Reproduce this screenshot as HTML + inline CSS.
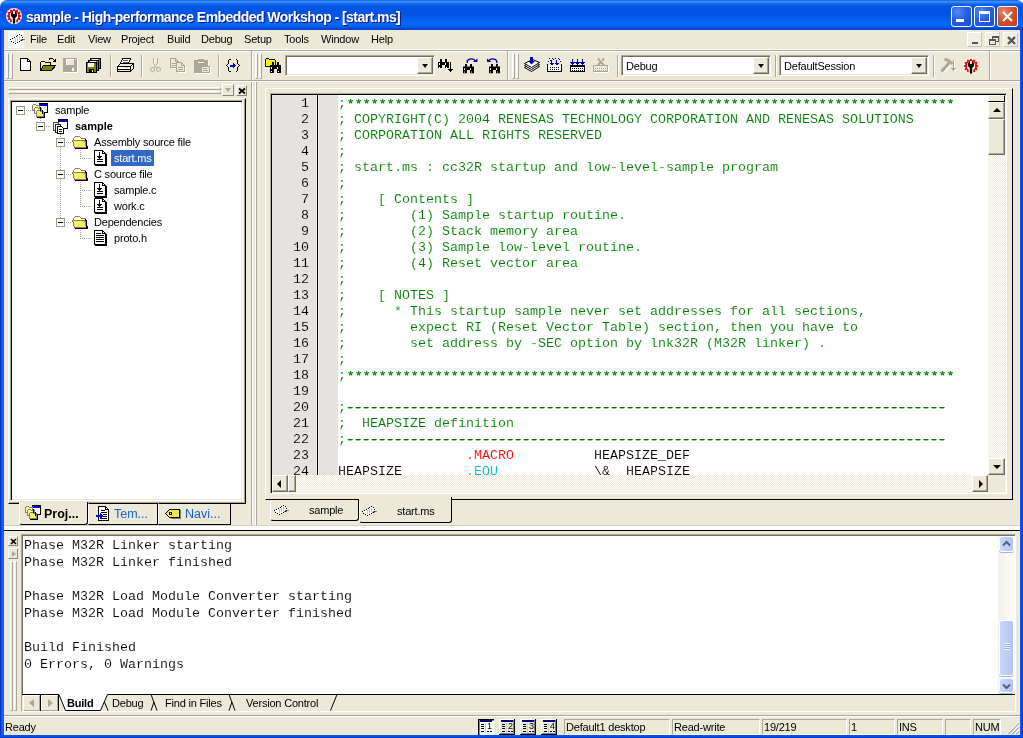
<!DOCTYPE html>
<html><head><meta charset="utf-8"><title>sample - High-performance Embedded Workshop - [start.ms]</title>
<style>
*,*:before,*:after{box-sizing:border-box;margin:0;padding:0}
html,body{width:1023px;height:738px;overflow:hidden;background:#ECE9D8}
body{position:relative;font-family:"Liberation Sans",sans-serif;font-size:11px;color:#000;letter-spacing:-0.2px}
.abs,.abs *{position:absolute}
#win{position:absolute;left:0;top:0;width:1023px;height:738px;overflow:hidden;will-change:transform}
#title{left:0;top:0;width:1024px;height:30px;background:linear-gradient(180deg,#0958d9 0,#3d8ff8 1.5px,#2f83f5 2.5px,#1166ec 4px,#0457e4 6px,#0354e3 9px,#0355e5 15px,#0560f0 20px,#0768fa 24px,#0663f2 26px,#0349d2 28.5px,#0240be 30px);border-radius:7px 7px 0 0}
#title .txt{left:26px;top:9px;color:#fff;font-weight:bold;font-size:14px;white-space:nowrap;text-shadow:1px 1px 0 #0a1883;letter-spacing:-0.55px}
.bl{background:#0855dd}
#menubar{left:4px;top:30px;width:1016px;height:20px;background:#ECE9D8}
#menubar span{top:3px;white-space:nowrap}
.tb{background:#ECE9D8}
.white{background:#fff}
.mono{font-family:"Liberation Mono",monospace;font-size:13.33px;white-space:pre;letter-spacing:0}

.hl{height:2px;border-top:1px solid #ACA899;border-bottom:1px solid #fff}
.vl{width:2px;border-left:1px solid #ACA899;border-right:1px solid #fff}
.vsep{width:2px;height:22px;border-left:1px solid #ACA899;border-right:1px solid #fff}
.grip{width:7px;height:26px}
.grip:before,.grip:after{content:"";position:absolute;top:0;width:3px;height:26px;background:#f7f6f0;border-left:1px solid #fff;border-top:1px solid #fff;border-right:1px solid #ACA899;border-bottom:1px solid #ACA899}
.grip:before{left:0}.grip:after{left:4px}
.combo{height:21px;background:#fff;border:1px solid;border-color:#ACA899 #fff #fff #ACA899;box-shadow:inset 1px 1px 0 #716F64,inset -1px -1px 0 #ECE9D8}
.combo span{left:4px;top:4px;font-size:11px;white-space:nowrap}
.combo:after{content:"";position:absolute;right:1px;top:1px;width:16px;height:17px;background:#ECE9D8;border:1px solid;border-color:#fff #716F64 #716F64 #fff;box-shadow:inset -1px -1px 0 #ACA899}
.combo:before{content:"";position:absolute;right:6px;top:8px;border:3.500px solid transparent;border-top:4px solid #000;border-bottom:0;z-index:2}
.mdib{width:15px;height:15px;background:#F1EFE5;border:1px solid;border-color:#fff #c9c6b8 #c9c6b8 #fff}

.hbar{height:3px;border-top:1px solid #fff;border-left:1px solid #fff;border-bottom:1px solid #ACA899;border-right:1px solid #ACA899}
.pbtn{background:#ECE9D8;border:1px solid;border-color:#fff #8a8778 #8a8778 #fff}
#treebox{border:1px solid;border-color:#fff #000 #000 #fff;box-shadow:inset -1px -1px 0 #ACA899}
#treebox:after{content:"";position:absolute;left:1px;top:1px;right:2px;bottom:2px;border:1px solid;border-color:#ACA899 #fff #fff #ACA899;box-shadow:inset 1px 1px 0 #000,inset -1px -1px 0 #ECE9D8}
.ptab{background:#ECE9D8;border:1px solid #000;border-left-color:#fff;font-size:12px;color:#1b5fd0;white-space:nowrap}
.ptab.act{border-top:0;color:#000;border-radius:0 0 3px 3px}
.ptab b,.ptab span{font-size:12.5px;letter-spacing:0}

.xb{width:9px;height:9px;border:1px solid #9c9a8c;background:#fff}
.xb:after{content:"";position:absolute;left:1px;top:3px;width:5px;height:1px;background:#000}
.hd{height:1px;background:repeating-linear-gradient(90deg,#a9a698 0 1px,transparent 1px 2px)}
.vd{width:1px;background:repeating-linear-gradient(180deg,#a9a698 0 1px,transparent 1px 2px)}
.tt{font-size:11px;line-height:16px;height:16px;white-space:nowrap}
.tt.b{font-weight:bold;letter-spacing:0}
.tt.sel{background:#316AC5;color:#fff;padding:0 2px 0 3px}

#lnum{left:0;top:1px;-webkit-text-stroke:0.1px #E5E2DF;width:37px;text-align:right;line-height:16px;color:#000}
#code{left:66px;top:1px;-webkit-text-stroke:0.1px #fff;line-height:16px;color:#000}
#code .c{position:static;color:#008000}
#code .s{position:relative;top:1px;left:0.500px;-webkit-text-stroke:0;text-shadow:0.300px 0 0 #008000}
#code .d{position:static;-webkit-text-stroke:0.3px #008000;text-shadow:1px 0 0 #008000,-0.500px 0 0 #008000}
#code .r{position:static;color:#f00}
#code .q{position:static;color:#10b8e8}
.dith{background:repeating-conic-gradient(#fff 0 25%,#ECE9D8 0 50%) 0 0/2px 2px}
.sbtn{background:#ECE9D8;border:1px solid;border-color:#fff #716F64 #716F64 #fff;box-shadow:inset -1px -1px 0 #ACA899}
.aup{left:4px;top:5px;border:4px solid transparent;border-bottom:4px solid #000;border-top:0}
.adn{left:4px;top:6px;border:4px solid transparent;border-top:4px solid #000;border-bottom:0}
.alt{left:4px;top:4px;border:4px solid transparent;border-right:4px solid #000;border-left:0}
.art{left:6px;top:4px;border:4px solid transparent;border-left:4px solid #000;border-right:0}
.mtab{background:#ECE9D8;border:1px solid #000;border-left-color:#fff;border-top:0;font-size:11px;white-space:nowrap;border-radius:0 0 3px 3px}
.mtab.act{border-top:0}

.vbar{width:3px;border-top:1px solid #fff;border-left:1px solid #fff;border-bottom:1px solid #ACA899;border-right:1px solid #ACA899}
#out{line-height:17px;color:#000;-webkit-text-stroke:0.1px #fff}
.xpb{background:linear-gradient(90deg,#c9d7fb,#bccdf8 60%,#b5c6f3);border:1px solid #fff;border-radius:3px;box-shadow:0 1px 0 #9fb5e6}
.sbtn2{background:#ECE9D8;border:1px solid;border-color:#fff #ACA899 #ACA899 #fff}
.sp{top:719px;height:16px;border:1px solid;border-color:#ACA899 #fff #fff #ACA899}
.sp span{left:1px;top:1px;font-size:11px;white-space:nowrap}

.cb{width:21px;height:21px;border:1px solid #fff;border-radius:3px;background:radial-gradient(circle at 30% 25%,#4c8af5 0,#2a5fe0 45%,#1d4bcc 100%)}
.cb.x{background:radial-gradient(circle at 30% 25%,#e8886a 0,#d4532e 45%,#b8391a 100%)}
</style></head><body>
<svg width="0" height="0" style="position:absolute"><defs>
<g id="i-ws"><rect x="7.500" y="0.500" width="8" height="9" fill="#fff" stroke="#000"/><rect x="7" y="1" width="8" height="2" fill="#0000d0"/><path d="M7.500 1v-0.500h8" stroke="#000" fill="none"/><path d="M0.500 2.500l1-1h2l1 1h3v5h-7z" fill="#fbf8a0" stroke="#808080"/><path d="M2.500 5.500l1-1h2l1 1h3v5h-7z" fill="#fbf8a0" stroke="#808080"/><path d="M4.500 8.500l1-1h2l1 1h3v5h-7z" fill="#f6f25c" stroke="#808080"/><path d="M12.500 9v5.500h-8" fill="none" stroke="#000"/><path d="M10.500 7v4M8.500 4v4" fill="none" stroke="#000"/></g>
<g id="i-prj"><rect x="6" y="0" width="9" height="9" fill="#fff" stroke="#000"/><rect x="7" y="1" width="8" height="2" fill="#0000c0"/><path d="M1.5 3.5h5v8h-5z" fill="#fff" stroke="#444"/><path d="M3.5 5.5h5v8h-5z" fill="#fff" stroke="#222"/><path d="M5.500 7.500h4l2 2v5h-6z" fill="#fff" stroke="#000"/><path d="M7 10h3M7 12h3" stroke="#000"/></g>
<g id="i-fold"><path d="M1.500 9.500v-6l2-2h4l2 2h4v5" fill="#ffffc4" stroke="#808080"/><path d="M0.500 5.500h12l2 7h-12z" fill="#f6f25c" stroke="#808080"/><path d="M13.500 4l2 9M3 13.500h13M14.500 5v8" fill="none" stroke="#000"/></g>
<g id="i-file"><path d="M2.500 0.500h8l3 3v11h-11z" fill="#fff" stroke="#000"/><path d="M14 4v11h-11" fill="none" stroke="#000"/><path d="M10.500 0.500v3h3" fill="none" stroke="#000"/><path d="M7.500 2v6M5.500 6l2 2 2-2M5 9.500h6M5 11.500h6" fill="none" stroke="#000"/></g>
<g id="i-doc"><path d="M2.500 0.500h8l3 3v11h-11z" fill="#fff" stroke="#000"/><path d="M14 4v11h-11" fill="none" stroke="#000"/><path d="M10.500 0.500v3h3" fill="none" stroke="#000"/><path d="M4 3.500h5M4 5.500h8M4 7.500h8M4 9.500h8M4 11.500h8" stroke="#000"/></g>
<g id="i-chip"><path d="M1.500 6.500L10.500 1.500L13.500 4.500V6.500L6.500 10.500Z" fill="#fff"/><path d="M6.500 5v4M8.500 4v4M10.500 3v4" stroke="#c4c4c4"/><path d="M12 6.500h4M11 7.500h3" stroke="#888"/><rect x="1" y="6" width="1" height="1" fill="#000"/><rect x="3" y="5" width="1" height="1" fill="#000"/><rect x="5" y="4" width="1" height="1" fill="#000"/><rect x="7" y="3" width="1" height="1" fill="#000"/><rect x="8" y="2" width="1" height="1" fill="#000"/><rect x="10" y="1" width="1" height="1" fill="#000"/><rect x="12" y="2" width="1" height="1" fill="#000"/><rect x="13" y="4" width="1" height="1" fill="#000"/><rect x="13" y="6" width="1" height="1" fill="#000"/><rect x="12" y="7" width="1" height="1" fill="#000"/><rect x="10" y="8" width="1" height="1" fill="#000"/><rect x="8" y="9" width="1" height="1" fill="#000"/><rect x="6" y="10" width="1" height="1" fill="#000"/><rect x="4" y="9" width="1" height="1" fill="#000"/><rect x="2" y="8" width="1" height="1" fill="#000"/></g>
<g id="i-gear"><circle r="8" fill="#fff"/><rect x="-0.9" y="-7.2" width="1.8" height="2.2" fill="#f00" transform="rotate(0)"/><rect x="-0.9" y="-7.2" width="1.8" height="2.2" fill="#f00" transform="rotate(30)"/><rect x="-0.9" y="-7.2" width="1.8" height="2.2" fill="#f00" transform="rotate(60)"/><rect x="-0.9" y="-7.2" width="1.8" height="2.2" fill="#f00" transform="rotate(90)"/><rect x="-0.9" y="-7.2" width="1.8" height="2.2" fill="#f00" transform="rotate(120)"/><rect x="-0.9" y="-7.2" width="1.8" height="2.2" fill="#f00" transform="rotate(150)"/><rect x="-0.9" y="-7.2" width="1.8" height="2.2" fill="#f00" transform="rotate(180)"/><rect x="-0.9" y="-7.2" width="1.8" height="2.2" fill="#f00" transform="rotate(210)"/><rect x="-0.9" y="-7.2" width="1.8" height="2.2" fill="#f00" transform="rotate(240)"/><rect x="-0.9" y="-7.2" width="1.8" height="2.2" fill="#f00" transform="rotate(270)"/><rect x="-0.9" y="-7.2" width="1.8" height="2.2" fill="#f00" transform="rotate(300)"/><rect x="-0.9" y="-7.2" width="1.8" height="2.2" fill="#f00" transform="rotate(330)"/><circle r="5.1" fill="none" stroke="#f00" stroke-width="2"/><circle r="4.1" fill="#fff"/><rect x="-2.200" y="3" width="4.400" height="5" fill="#fff"/><circle cx="0" cy="-1.300" r="3.100" fill="#000"/><rect x="-0.900" y="-5" width="1.800" height="3" fill="#fff"/><rect x="-1.200" y="0" width="2.400" height="7.600" fill="#000"/></g>
<g id="i-tmpl"><path d="M3.500 0.500h7l3 3v11h-10z" fill="#fff" stroke="#000"/><path d="M10.500 0.500v3h3" fill="none" stroke="#000"/><path d="M6 4.500h4M6 6.500h6M8 8.500h4M8 10.500h4M6 12.500h6" stroke="#000"/><path d="M1 9h4v-2l3 3l-3 3v-2h-4z" fill="#0000e0"/></g>
<g id="i-navi"><path d="M0.500 7.500l4-4h10v8h-10z" fill="#f0e848" stroke="#000"/><path d="M15.500 4v8h-10" fill="none" stroke="#777"/><rect x="4.500" y="6.500" width="2" height="2" fill="#fff" stroke="#000"/></g>
</defs></svg>
<div id="win" class="abs">
<div style="left:0;top:0;width:1023px;height:8px;background:#fff"></div>
<div id="title"><svg style="left:6px;top:8px" width="16" height="16" viewBox="-8 -8 16 16"><use href="#i-gear"/></svg><div class="cb" style="left:951px;top:6px"><i style="left:4px;top:12px;width:8px;height:3px;background:#fff"></i></div>
<div class="cb" style="left:974px;top:6px"><i style="left:4px;top:4px;width:11px;height:11px;border:1px solid #fff;border-top-width:3px"></i></div>
<div class="cb x" style="left:997px;top:6px"><svg style="left:3px;top:3px" width="13" height="13" viewBox="0 0 13 13"><path d="M2 2 L11 11 M11 2 L2 11" stroke="#fff" stroke-width="2.200"/></svg></div>
<div class="txt">sample - High-performance Embedded Workshop - [start.ms]</div></div>
<div style="left:0;top:30px;width:4px;height:708px;background:linear-gradient(90deg,#001bd0 0,#0a45e0 1px,#1668ee 2.500px,#0a58e0 4px)"></div>
<div style="left:1020px;top:30px;width:4px;height:708px;background:linear-gradient(90deg,#0a58e0 0,#0a50dc 1.500px,#0032d0 3px,#001bd0 4px)"></div>
<div style="left:0;top:735px;width:1024px;height:4px;background:linear-gradient(180deg,#0a58e0 0,#0a50dc 1.500px,#0032d0 3px,#001bd0 4px)"></div>
<div id="menubar">
<span style="left:26px">File</span><span style="left:53px">Edit</span><span style="left:84px">View</span><span style="left:117px">Project</span><span style="left:163px">Build</span><span style="left:197px">Debug</span><span style="left:240px">Setup</span><span style="left:280px">Tools</span><span style="left:317px">Window</span><span style="left:367px">Help</span>
</div>
<!-- menu icon + mdi buttons -->
<div style="left:8px;top:31px;width:16px;height:17px;background:#fff"></div>
<svg style="left:9px;top:33px" width="16" height="12" viewBox="0 0 16 12" shape-rendering="crispEdges"><use href="#i-chip"/></svg>
<div class="mdib" style="left:967px;top:32px"><i style="left:4px;top:9px;width:6px;height:2px;background:#555"></i></div>
<div class="mdib" style="left:985px;top:32px"><i style="left:6px;top:3px;width:7px;height:6px;border:1px solid #555;border-top-width:2px"></i><i style="left:3px;top:6px;width:7px;height:6px;border:1px solid #555;border-top-width:2px;background:#ECE9D8"></i></div>
<div class="mdib" style="left:1003px;top:32px"><svg style="left:3px;top:3px" width="9" height="9" viewBox="0 0 9 9"><path d="M1 1 L8 8 M8 1 L1 8" stroke="#555" stroke-width="2.400"/></svg></div>
<!-- etched lines -->
<div style="left:4px;top:49px;width:1016px;height:3px;background:#fff;border-top:1px solid #fff;border-bottom:1px solid #fff"><i style="left:0;top:0;width:1016px;height:1px;background:#ACA899"></i></div>
<div class="hl" style="left:4px;top:80px;width:1016px"></div>
<!-- toolbar 1 -->
<div class="grip" style="left:6px;top:53px"></div>
<div class="vsep" style="left:110px;top:55px"></div>
<div class="vsep" style="left:141px;top:55px"></div>
<div class="vsep" style="left:218px;top:55px"></div>
<div class="vl" style="left:251px;top:51px;height:29px"></div>
<div class="grip" style="left:255px;top:53px"></div>
<div class="combo" style="left:285px;top:55px;width:150px"></div>
<div class="vl" style="left:507px;top:51px;height:29px"></div>
<div class="grip" style="left:512px;top:53px"></div>
<div class="vsep" style="left:617px;top:55px"></div>
<div class="combo" style="left:621px;top:55px;width:150px"><span>Debug</span></div>
<div class="vsep" style="left:775px;top:55px"></div>
<div class="combo" style="left:779px;top:55px;width:150px"><span>DefaultSession</span></div>
<div class="vsep" style="left:933px;top:55px"></div>
<div class="vl" style="left:989px;top:51px;height:29px"></div>
<svg style="left:963px;top:58px" width="16" height="16" viewBox="-8 -8 16 16"><use href="#i-gear"/></svg>
<svg style="left:20px;top:58px" width="12" height="14" viewBox="0 0 12 14" shape-rendering="crispEdges"><path d="M0.500 0.500h7l3 3v9h-10z" fill="#fff" stroke="#000"/><path d="M7.500 0.500v3h3" fill="none" stroke="#000"/></svg>
<svg style="left:40px;top:57px" width="16" height="15" viewBox="0 0 16 15" shape-rendering="crispEdges"><path d="M0.500 13.500v-8l1-1h3l1 1h5v2" fill="#f7f38a" stroke="#000"/><path d="M0.500 13.500l3-5h12l-4 5z" fill="#808000" stroke="#000"/><path d="M8.500 3.500c1.500-3 5-3 6 0.500" fill="none" stroke="#000"/><path d="M12.500 4.500h3v-3" fill="none" stroke="#000"/></svg>
<svg style="left:63px;top:58px" width="15" height="15" viewBox="0 0 15 15" shape-rendering="crispEdges"><rect x="1" y="1" width="14" height="14" fill="#fff"/><rect x="0" y="0" width="14" height="14" fill="#ACA899"/><rect x="3" y="1" width="8" height="6" fill="#fff"/><rect x="4" y="2" width="7" height="5" fill="#ECE9D8"/><rect x="9" y="10" width="2" height="3" fill="#fff"/><rect x="12" y="1" width="1" height="1" fill="#fff"/></svg>
<svg style="left:86px;top:58px" width="16" height="15" viewBox="0 0 16 15" shape-rendering="crispEdges"><g transform="translate(4,0)"><rect x="0.500" y="0.500" width="10" height="10" fill="#808000" stroke="#000"/><rect x="2" y="1" width="6" height="4" fill="#fff"/><rect x="3" y="7" width="5" height="3" fill="#000"/><rect x="6" y="8" width="1" height="2" fill="#fff"/></g><g transform="translate(2,2)"><rect x="0.500" y="0.500" width="10" height="10" fill="#808000" stroke="#000"/><rect x="2" y="1" width="6" height="4" fill="#fff"/><rect x="3" y="7" width="5" height="3" fill="#000"/><rect x="6" y="8" width="1" height="2" fill="#fff"/></g><g transform="translate(0,4)"><rect x="0.500" y="0.500" width="10" height="10" fill="#808000" stroke="#000"/><rect x="2" y="1" width="6" height="4" fill="#fff"/><rect x="3" y="7" width="5" height="3" fill="#000"/><rect x="6" y="8" width="1" height="2" fill="#fff"/></g></svg>
<svg style="left:117px;top:58px" width="17" height="15" viewBox="0 0 17 15" shape-rendering="crispEdges"><path d="M3.500 5.500l2-5h8l-2 5" fill="#fff" stroke="#000"/><path d="M6 2.500h5M5.500 4h5" stroke="#555"/><path d="M0.500 8.500l3-3h10l3 0v5l-3 3h-13z" fill="#ECE9D8" stroke="#000"/><path d="M0.500 8.500h13l3-3M13.500 8.500v5" fill="none" stroke="#000"/><rect x="1" y="9" width="12" height="2" fill="#fff"/><rect x="8" y="9" width="3" height="1" fill="#e8d800"/><path d="M1 11.500h12" stroke="#000"/></svg>
<svg style="left:150px;top:58px" width="12" height="15" viewBox="0 0 12 15"><path d="M3.500 0v5l2 3l2-3v-5M5.500 8l-2 2M5.500 8l2 2" fill="none" stroke="#ACA899"/><circle cx="2.500" cy="11.500" r="2" fill="none" stroke="#ACA899"/><circle cx="8.500" cy="11.500" r="2" fill="none" stroke="#ACA899"/><path d="M4.500 1v4l2 3M9.500 13.500a2 2 0 0 1-2 1" fill="none" stroke="#fff"/></svg>
<svg style="left:170px;top:58px" width="17" height="15" viewBox="0 0 17 15" shape-rendering="crispEdges"><g transform="translate(0,0)"><path d="M1.500 1.500h5l3 3v6h-7z" fill="#fff" stroke="#fff"/><path d="M0.500 0.500h5l3 3v6h-8z" fill="#ECE9D8" stroke="#ACA899"/><path d="M5.500 0.500v3h3M2 5.500h5M2 7.500h5" fill="none" stroke="#ACA899"/></g><g transform="translate(6,4)"><path d="M1.500 1.500h5l3 3v6h-7z" fill="#fff" stroke="#fff"/><path d="M0.500 0.500h5l3 3v6h-8z" fill="#ECE9D8" stroke="#ACA899"/><path d="M5.500 0.500v3h3M2 5.500h5M2 7.500h5" fill="none" stroke="#ACA899"/></g></svg>
<svg style="left:194px;top:59px" width="18" height="15" viewBox="0 0 18 15" shape-rendering="crispEdges"><rect x="1" y="2" width="14" height="13" rx="1" fill="#fff"/><rect x="0" y="1" width="14" height="13" rx="1" fill="#ACA899"/><rect x="4" y="0" width="6" height="3" fill="#ACA899"/><rect x="4" y="3" width="6" height="1" fill="#fff"/><rect x="8" y="8" width="9" height="7" fill="#fff"/><rect x="7.500" y="7.500" width="8" height="6" fill="#ECE9D8" stroke="#ACA899"/><path d="M9 9.500h4M9 11.500h5" stroke="#ACA899"/></svg>
<svg style="left:226px;top:59px" width="15" height="14" viewBox="0 0 15 14" shape-rendering="crispEdges"><path d="M4.500 0.500h-1l-1 1v3l-2 2l2 2v3l1 1h1" fill="none" stroke="#000"/><path d="M9.500 0.500h1l1 1v3l2 2l-2 2v3l-1 1h-1" fill="none" stroke="#000"/><path d="M4 5.500h3v-1.500l3 2.500l-3 2.500v-1.500h-3z" fill="#0000e0"/></svg>
<svg style="left:265px;top:58px" width="17" height="15" viewBox="0 0 17 15" shape-rendering="crispEdges"><path d="M0.500 8.500v-7l1-1h2l1 1h5l1 1v6z" fill="#f4f000" stroke="#000"/><g transform="translate(5,4)"><path d="M2 0h2v3h3v-3h2v3h2v8h-4v-4h-3v4h-4v-8h2z" fill="#000"/><rect x="1" y="5" width="1" height="2" fill="#fff"/><rect x="7" y="5" width="1" height="2" fill="#fff"/><rect x="1" y="9" width="1" height="1" fill="#fff"/><rect x="8" y="9" width="1" height="1" fill="#fff"/></g></svg>
<svg style="left:438px;top:59px" width="17" height="15" viewBox="0 0 17 15" shape-rendering="crispEdges"><g transform="scale(1,0.85)"><g transform="translate(0,0)"><path d="M2 0h2v3h3v-3h2v3h2v8h-4v-4h-3v4h-4v-8h2z" fill="#000"/><rect x="1" y="5" width="1" height="2" fill="#fff"/><rect x="7" y="5" width="1" height="2" fill="#fff"/><rect x="1" y="9" width="1" height="1" fill="#fff"/><rect x="8" y="9" width="1" height="1" fill="#fff"/></g></g><path d="M12.500 3v10M10 10.500h5M11 11.500h3M12 12.500h1" stroke="#000"/></svg>
<svg style="left:463px;top:58px" width="16" height="16" viewBox="0 0 16 16"><g transform="translate(0,6) scale(1,0.85)"><g transform="translate(0,0)"><path d="M2 0h2v3h3v-3h2v3h2v8h-4v-4h-3v4h-4v-8h2z" fill="#000"/><rect x="1" y="5" width="1" height="2" fill="#fff"/><rect x="7" y="5" width="1" height="2" fill="#fff"/><rect x="1" y="9" width="1" height="1" fill="#fff"/><rect x="8" y="9" width="1" height="1" fill="#fff"/></g></g><path d="M4.500 5c-2-4 6-6 8-1.500" fill="none" stroke="#0000b0" stroke-width="1.4"/><path d="M10 4h4.500v-3.500z" fill="#0000b0"/></svg>
<svg style="left:487px;top:58px" width="16" height="16" viewBox="0 0 16 16"><g transform="translate(2,6) scale(1,0.85)"><g transform="translate(0,0)"><path d="M2 0h2v3h3v-3h2v3h2v8h-4v-4h-3v4h-4v-8h2z" fill="#000"/><rect x="1" y="5" width="1" height="2" fill="#fff"/><rect x="7" y="5" width="1" height="2" fill="#fff"/><rect x="1" y="9" width="1" height="1" fill="#fff"/><rect x="8" y="9" width="1" height="1" fill="#fff"/></g></g><path d="M9.500 5c2-4-6-6-8-1.500" fill="none" stroke="#0000b0" stroke-width="1.400"/><path d="M4.500 4h-4.500v-3.500z" fill="#0000b0"/></svg>
<svg style="left:524px;top:57px" width="17" height="17" viewBox="0 0 17 17"><path d="M0.500 10.500l8-4l7 3l-8 5z" fill="#fff" stroke="#000"/><path d="M0.500 8.500l8-4l7 3l-8 5z" fill="#fff" stroke="#000"/><path d="M0.500 6.500l8-4l7 3l-8 5z" fill="#fff" stroke="#000"/><path d="M6 0h3v4h2l-3.500 3.500l-3.500-3.500h2z" fill="#0000b0"/></svg>
<svg style="left:547px;top:58px" width="16" height="15" viewBox="0 0 16 15" shape-rendering="crispEdges"><rect x="0.500" y="6.500" width="14" height="7" fill="#fff" stroke="#000"/><rect x="1" y="4" width="13" height="3" fill="#ECE9D8"/><rect x="2" y="0" width="1" height="1" fill="#0000b0"/><rect x="5" y="0" width="1" height="1" fill="#0000b0"/><rect x="8" y="0" width="1" height="1" fill="#0000b0"/><rect x="11" y="0" width="1" height="1" fill="#0000b0"/><rect x="3" y="2" width="1" height="1" fill="#0000b0"/><rect x="6" y="1" width="1" height="1" fill="#0000b0"/><rect x="9" y="2" width="1" height="1" fill="#0000b0"/><rect x="12" y="1" width="1" height="1" fill="#0000b0"/><rect x="1" y="3" width="1" height="1" fill="#0000b0"/><rect x="13" y="3" width="1" height="1" fill="#0000b0"/><path d="M4 2h1v3h2l-2.500 2.500l-2.500-2.500h2z" fill="#0000b0"/><path d="M9 2h1v3h2l-2.500 2.500l-2.500-2.500h2z" fill="#0000b0"/><rect x="3" y="9" width="1" height="1" fill="#000"/><rect x="5" y="9" width="1" height="1" fill="#000"/><rect x="7" y="9" width="1" height="1" fill="#000"/><rect x="9" y="9" width="1" height="1" fill="#000"/><rect x="11" y="9" width="1" height="1" fill="#000"/><rect x="3" y="11" width="1" height="1" fill="#000"/><rect x="5" y="11" width="1" height="1" fill="#000"/><rect x="7" y="11" width="1" height="1" fill="#000"/><rect x="9" y="11" width="1" height="1" fill="#000"/><rect x="11" y="11" width="1" height="1" fill="#000"/></svg>
<svg style="left:570px;top:59px" width="16" height="14" viewBox="0 0 16 14" shape-rendering="crispEdges"><rect x="0.500" y="6.500" width="14" height="6" fill="#fff" stroke="#000"/><rect x="0" y="6" width="15" height="2" fill="#000"/><path d="M2.5 0v6M0 3.500h5M1 4.500h3" stroke="#0000b0"/><path d="M7.5 0v6M5 3.500h5M6 4.500h3" stroke="#0000b0"/><path d="M12.5 0v6M10 3.500h5M11 4.500h3" stroke="#0000b0"/><rect x="2" y="9" width="1" height="1" fill="#000"/><rect x="4" y="9" width="1" height="1" fill="#000"/><rect x="6" y="9" width="1" height="1" fill="#000"/><rect x="8" y="9" width="1" height="1" fill="#000"/><rect x="10" y="9" width="1" height="1" fill="#000"/><rect x="12" y="9" width="1" height="1" fill="#000"/><rect x="2" y="11" width="1" height="1" fill="#000"/><rect x="4" y="11" width="1" height="1" fill="#000"/><rect x="6" y="11" width="1" height="1" fill="#000"/><rect x="8" y="11" width="1" height="1" fill="#000"/><rect x="10" y="11" width="1" height="1" fill="#000"/><rect x="12" y="11" width="1" height="1" fill="#000"/></svg>
<svg style="left:593px;top:58px" width="17" height="15" viewBox="0 0 17 15"><rect x="1" y="8" width="15" height="7" fill="#fff"/><rect x="0.500" y="7.500" width="14" height="6" fill="#ECE9D8" stroke="#ACA899"/><rect x="2" y="10" width="1" height="1" fill="#ACA899"/><rect x="4" y="10" width="1" height="1" fill="#ACA899"/><rect x="6" y="10" width="1" height="1" fill="#ACA899"/><rect x="8" y="10" width="1" height="1" fill="#ACA899"/><rect x="10" y="10" width="1" height="1" fill="#ACA899"/><rect x="12" y="10" width="1" height="1" fill="#ACA899"/><rect x="2" y="12" width="1" height="1" fill="#ACA899"/><rect x="4" y="12" width="1" height="1" fill="#ACA899"/><rect x="6" y="12" width="1" height="1" fill="#ACA899"/><rect x="8" y="12" width="1" height="1" fill="#ACA899"/><rect x="10" y="12" width="1" height="1" fill="#ACA899"/><rect x="12" y="12" width="1" height="1" fill="#ACA899"/><path d="M5 0.500l6 6.500M11 0.500l-6 6.500" stroke="#ACA899" stroke-width="2.200"/><path d="M7 1l5 5" stroke="#fff" stroke-width="0.800"/></svg>
<svg style="left:940px;top:58px" width="18" height="16" viewBox="0 0 18 16"><path d="M2.500 14.500l8-9" stroke="#fff" stroke-width="3.200"/><path d="M1.500 13.500l8-9" stroke="#ACA899" stroke-width="3.200"/><path d="M4.500 0c3.500 0 7 2 9 5.500l-2.500 1.500c-1-2-4-4-6.500-4z" fill="#ACA899"/><path d="M14.500 3v11M12 11.500h5M13 12.500h3M14 13.500h1" stroke="#fff"/><path d="M13.500 2v11M11 10.500h5M12 11.500h3M13 12.500h1" stroke="#ACA899"/></svg>

<!-- left docking panel -->
<div class="vl" style="left:251px;top:82px;height:443px"></div>
<div class="vl" style="left:255px;top:82px;height:443px;border-left-color:#fff;border-right-color:#ACA899"></div>
<div class="hbar" style="left:8px;top:87px;width:213px"></div>
<div class="hbar" style="left:8px;top:91px;width:213px"></div>
<div class="pbtn" style="left:222px;top:84px;width:12px;height:12px"><i style="left:2px;top:3px;border:3.5px solid transparent;border-top:4px solid #ACA899;border-bottom:0"></i></div>
<div class="pbtn" style="left:236px;top:85px;width:11px;height:11px"><svg style="left:1px;top:1px" width="8" height="8" viewBox="0 0 8 8"><path d="M1 1.5 L7 6.5 M7 1.5 L1 6.5" stroke="#000" stroke-width="1.8"/></svg></div>
<div id="treebox" style="left:8px;top:98px;width:238px;height:406px"></div>
<div id="tree" style="left:12px;top:102px;width:229px;height:397px;background:#fff;overflow:hidden">
<div class="xb" style="left:4px;top:4px"></div>
<div class="hd" style="left:14px;top:8px;width:6px"></div>
<svg class="ti" style="left:20px;top:1px" width="16" height="16" viewBox="0 0 16 16" shape-rendering="crispEdges"><use href="#i-ws"/></svg>
<span class="tt " style="left:43px;top:0px">sample</span>
<div class="vd" style="left:28px;top:16px;height:4px"></div>
<div class="xb" style="left:24px;top:20px"></div>
<div class="hd" style="left:34px;top:24px;width:6px"></div>
<svg class="ti" style="left:40px;top:17px" width="16" height="16" viewBox="0 0 16 16" shape-rendering="crispEdges"><use href="#i-prj"/></svg>
<span class="tt b" style="left:63px;top:16px">sample</span>
<div class="vd" style="left:48px;top:32px;height:4px"></div>
<div class="xb" style="left:44px;top:36px"></div>
<div class="hd" style="left:54px;top:40px;width:6px"></div>
<svg class="ti" style="left:60px;top:33px" width="16" height="16" viewBox="0 0 16 16" shape-rendering="crispEdges"><use href="#i-fold"/></svg>
<span class="tt " style="left:82px;top:32px">Assembly source file</span>
<div class="xb" style="left:44px;top:68px"></div>
<div class="hd" style="left:54px;top:72px;width:6px"></div>
<svg class="ti" style="left:60px;top:65px" width="16" height="16" viewBox="0 0 16 16" shape-rendering="crispEdges"><use href="#i-fold"/></svg>
<span class="tt " style="left:82px;top:64px">C source file</span>
<div class="xb" style="left:44px;top:116px"></div>
<div class="hd" style="left:54px;top:120px;width:6px"></div>
<svg class="ti" style="left:60px;top:113px" width="16" height="16" viewBox="0 0 16 16" shape-rendering="crispEdges"><use href="#i-fold"/></svg>
<span class="tt " style="left:82px;top:112px">Dependencies</span>
<div class="vd" style="left:48px;top:45px;height:23px"></div>
<div class="vd" style="left:48px;top:77px;height:39px"></div>
<div class="vd" style="left:68px;top:48px;height:9px"></div>
<div class="hd" style="left:68px;top:56px;width:11px"></div>
<svg class="ti" style="left:80px;top:48px" width="16" height="16" viewBox="0 0 16 16" shape-rendering="crispEdges"><use href="#i-file"/></svg>
<span class="tt sel" style="left:99px;top:48px">start.ms</span>
<div class="vd" style="left:68px;top:80px;height:25px"></div>
<div class="hd" style="left:68px;top:88px;width:11px"></div>
<div class="hd" style="left:68px;top:104px;width:11px"></div>
<svg class="ti" style="left:80px;top:80px" width="16" height="16" viewBox="0 0 16 16" shape-rendering="crispEdges"><use href="#i-file"/></svg>
<svg class="ti" style="left:80px;top:96px" width="16" height="16" viewBox="0 0 16 16" shape-rendering="crispEdges"><use href="#i-file"/></svg>
<span class="tt " style="left:102px;top:80px">sample.c</span>
<span class="tt " style="left:102px;top:96px">work.c</span>
<div class="vd" style="left:68px;top:128px;height:9px"></div>
<div class="hd" style="left:68px;top:136px;width:11px"></div>
<svg class="ti" style="left:80px;top:128px" width="16" height="16" viewBox="0 0 16 16" shape-rendering="crispEdges"><use href="#i-doc"/></svg>
<span class="tt " style="left:102px;top:128px">proto.h</span>

</div>
<!-- panel tabs -->
<div class="ptab act" style="left:19px;top:502px;width:69px;height:23px"><b style="left:24px;top:5px">Proj...</b><svg style="left:5px;top:3px" width="16" height="16" viewBox="0 0 16 16" shape-rendering="crispEdges"><use href="#i-ws"/></svg></div>
<div class="ptab" style="left:88px;top:503px;width:70px;height:22px"><span style="left:25px;top:3px">Tem...</span><svg style="left:6px;top:2px" width="16" height="16" viewBox="0 0 16 16" shape-rendering="crispEdges"><use href="#i-tmpl"/></svg></div>
<div class="ptab" style="left:158px;top:503px;width:73px;height:22px"><span style="left:26px;top:3px">Navi...</span><svg style="left:6px;top:2px" width="16" height="16" viewBox="0 0 16 16" shape-rendering="crispEdges"><use href="#i-navi"/></svg></div>
<!-- MDI child window frame -->
<div style="left:265px;top:88px;width:748px;height:412px;border:1px solid #fff;border-right-color:#000;border-bottom-color:#000"></div>
<div style="left:270px;top:93px;width:737px;height:401px;border:1px solid;border-color:#ACA899 #fff #fff #ACA899;box-shadow:inset 1px 1px 0 #000,inset -1px -1px 0 #F4F3EC"></div>
<div id="ed" style="left:272px;top:95px;width:716px;height:380px;background:#fff;overflow:hidden">
<div style="left:0;top:0;width:66px;height:380px;background:#E5E2DF"></div>
<div style="left:44px;top:0;width:3px;height:380px;background:#000;border-left:1px solid #EFEDEA;border-right:1px solid #EFEDEA"></div>
<div id="lnum" class="mono">1
2
3
4
5
6
7
8
9
10
11
12
13
14
15
16
17
18
19
20
21
22
23
24</div>
<div id="code" class="mono"><span class="c">;<span class="s">****************************************************************************</span></span>
<span class="c">; COPYRIGHT(C) 2004 RENESAS TECHNOLOGY CORPORATION AND RENESAS SOLUTIONS</span>
<span class="c">; CORPORATION ALL RIGHTS RESERVED</span>
<span class="c">;</span>
<span class="c">; start.ms : cc32R startup and low-level-sample program</span>
<span class="c">;</span>
<span class="c">;    [ Contents ]</span>
<span class="c">;        (1) Sample startup routine.</span>
<span class="c">;        (2) Stack memory area</span>
<span class="c">;        (3) Sample low-level routine.</span>
<span class="c">;        (4) Reset vector area</span>
<span class="c">;</span>
<span class="c">;    [ NOTES ]</span>
<span class="c">;      * This startup sample never set addresses for all sections,</span>
<span class="c">;        expect RI (Reset Vector Table) section, then you have to</span>
<span class="c">;        set address by -SEC option by lnk32R (M32R linker) .</span>
<span class="c">;</span>
<span class="c">;<span class="s">****************************************************************************</span></span>

<span class="c">;<span class="d">---------------------------------------------------------------------------</span></span>
<span class="c">;  HEAPSIZE definition</span>
<span class="c">;<span class="d">---------------------------------------------------------------------------</span></span>
                <span class="r">.MACRO</span>          HEAPSIZE_DEF
HEAPSIZE        <span class="q">.EQU</span>            \&amp;  HEAPSIZE</div>

</div>
<!-- v scrollbar -->
<div class="dith" style="left:988px;top:95px;width:17px;height:380px"></div>
<div style="left:988px;top:95px;width:17px;height:7px;background:#ECE9D8;border-right:1px solid #000;border-bottom:1px solid #000;border-left:1px solid #fff;border-top:1px solid #fff"></div>
<div class="sbtn" style="left:988px;top:102px;width:17px;height:17px"><i class="aup"></i></div>
<div class="sbtn" style="left:988px;top:119px;width:17px;height:36px"></div>
<div class="sbtn" style="left:988px;top:458px;width:17px;height:17px"><i class="adn"></i></div>
<!-- h scrollbar -->
<div class="dith" style="left:272px;top:475px;width:716px;height:17px"></div>
<div class="sbtn" style="left:272px;top:475px;width:16px;height:17px"><i class="alt"></i></div>
<div class="sbtn" style="left:288px;top:475px;width:8px;height:17px"></div>
<div class="sbtn" style="left:972px;top:475px;width:16px;height:17px"><i class="art"></i></div>
<div style="left:988px;top:475px;width:17px;height:17px;background:#ECE9D8"></div>
<!-- MDI tabs -->
<div class="mtab" style="left:270px;top:500px;width:89px;height:21px"><span style="left:38px;top:4px">sample</span><svg style="left:2px;top:4px" width="16" height="12" viewBox="0 0 16 12" shape-rendering="crispEdges"><use href="#i-chip"/></svg></div>
<div class="mtab act" style="left:359px;top:497px;width:93px;height:26px"><span style="left:37px;top:8px">start.ms</span><svg style="left:1px;top:8px" width="16" height="12" viewBox="0 0 16 12" shape-rendering="crispEdges"><use href="#i-chip"/></svg></div>
<!-- splitter between top and output -->
<div style="left:4px;top:525px;width:1016px;height:5px;background:#fff;border-top:1px solid #d4d1c2"></div>
<div style="left:4px;top:530px;width:1016px;height:1px;background:#000"></div>
<!-- output docking panel -->
<div class="pbtn" style="left:8px;top:536px;width:10px;height:10px"><svg style="left:1px;top:1px" width="7" height="7" viewBox="0 0 7 7"><path d="M1 1 L6 6 M6 1 L1 6" stroke="#000" stroke-width="1.6"/></svg></div>
<div class="pbtn" style="left:8px;top:548px;width:10px;height:11px"><i style="left:3px;top:2px;border:3px solid transparent;border-left:4px solid #ACA899;border-right:0"></i></div>
<div class="vbar" style="left:10px;top:561px;height:150px"></div>
<div class="vbar" style="left:14px;top:561px;height:150px"></div>
<div style="left:21px;top:534px;width:995px;height:178px;border:1px solid;border-color:#ACA899 #fff #fff #ACA899"></div>
<div style="left:22px;top:535px;width:993px;height:160px;border-top:1px solid #716F64;border-left:1px solid #716F64;background:#fff"></div>
<div id="out" class="mono" style="left:24px;top:537px">Phase M32R Linker starting
Phase M32R Linker finished

Phase M32R Load Module Converter starting
Phase M32R Load Module Converter finished

Build Finished
0 Errors, 0 Warnings</div>
<!-- XP scrollbar -->
<div style="left:998px;top:536px;width:17px;height:158px;background:linear-gradient(90deg,#f3f1ec,#fefefb)"></div>
<div class="xpb" style="left:999px;top:536px;width:15px;height:16px"><svg style="left:2px;top:3px" width="9" height="7" viewBox="0 0 9 7"><path d="M1 5.500 L4.500 2 L8 5.500" fill="none" stroke="#4d6185" stroke-width="2"/></svg></div>
<div class="xpb" style="left:999px;top:620px;width:15px;height:56px"><i style="left:4px;top:22px;width:6px;height:7px;background:repeating-linear-gradient(180deg,#eef4fe 0 1px,#8cb0f8 1px 2px)"></i></div>
<div class="xpb" style="left:999px;top:678px;width:15px;height:15px"><svg style="left:2px;top:4px" width="9" height="7" viewBox="0 0 9 7"><path d="M1 1.500 L4.500 5 L8 1.500" fill="none" stroke="#4d6185" stroke-width="2"/></svg></div>
<!-- bottom tab row -->
<div style="left:22px;top:694px;width:993px;height:1px;background:#000"></div>
<div class="sbtn2" style="left:23px;top:695px;width:17px;height:16px"><i style="left:5px;top:3px;border:4px solid transparent;border-right:5px solid #ACA899;border-left:0"></i></div>
<div style="left:40px;top:695px;width:1px;height:16px;background:#000"></div>
<div class="sbtn2" style="left:41px;top:695px;width:17px;height:16px"><i style="left:6px;top:3px;border:4px solid transparent;border-left:5px solid #ACA899;border-right:0"></i></div>
<svg style="left:57px;top:694px" width="290" height="18" viewBox="0 0 290 18"><path d="M1.500 0 V17 M2 1 L8 16.500 H44 L51 0.500" fill="#fff" stroke="none"/><path d="M2 0.500 L8.500 16.500 H43.500 L50.500 0.500" fill="#fff" stroke="#000"/><path d="M2 0.500 H50" stroke="#fff"/><path d="M1.500 0 V17" stroke="#000"/><path d="M47.500 8 L51 16.500 M94 0.500 L100 16.500 M97 8 L94 16.500 M172 0.500 L178 16.500 M175 8 L172 16.500 M280 0.500 L273.500 16.500" fill="none" stroke="#000"/></svg>
<b style="left:67px;top:697px;font-size:11px">Build</b>
<span style="left:112px;top:697px;font-size:11px">Debug</span>
<span style="left:165px;top:697px;font-size:11px">Find in Files</span>
<span style="left:246px;top:697px;font-size:11px">Version Control</span>
<!-- status bar -->
<div style="left:4px;top:715px;width:1016px;height:1px;background:#ACA899"></div>
<div style="left:4px;top:716px;width:1016px;height:1px;background:#fff"></div>
<span style="left:5px;top:721px;font-size:11px">Ready</span>
<div class="sp" style="left:564px;width:106px"><span>Default1 desktop</span></div>
<div class="sp" style="left:672px;width:88px"><span>Read-write</span></div>
<div class="sp" style="left:762px;width:85px"><span>19/219</span></div>
<div class="sp" style="left:849px;width:46px"><span>1</span></div>
<div class="sp" style="left:897px;width:46px"><span>INS</span></div>
<div class="sp" style="left:945px;width:26px"></div>
<div class="sp" style="left:973px;width:28px"><span>NUM</span></div>
<svg style="left:1006px;top:721px" width="14" height="14" viewBox="0 0 14 14"><path d="M13 2 L2 13 M13 6 L6 13 M13 10 L10 13" stroke="#ACA899" stroke-width="1.4"/><path d="M13 1 L1 13 M13 5 L5 13 M13 9 L9 13" stroke="#fff" stroke-width="1"/></svg>
<svg style="left:478px;top:719px" width="16" height="16" viewBox="0 0 16 16" shape-rendering="crispEdges"><rect width="16" height="16" fill="#fff"/><path d="M0.500 16V0.500H16" fill="none" stroke="#000"/><path d="M1.500 16V1.500H16" fill="none" stroke="#808080"/><rect x="2" y="1" width="12" height="2" fill="#000080"/><path d="M3 5.500h3M3 7.500h3M3 9.500h3M3 12.500h3M9 12.500h2M12 12.500h2" stroke="#000"/><path d="M7.500 4v10" stroke="#ccc"/></svg><span style="left:487px;top:722px;font-size:9px;line-height:9px;letter-spacing:0">1</span>
<svg style="left:499px;top:719px" width="16" height="16" viewBox="0 0 16 16" shape-rendering="crispEdges"><rect width="16" height="16" fill="#ECE9D8"/><path d="M0.500 15V0.500H15" fill="none" stroke="#fff"/><path d="M15.500 0V15.500H0" fill="none" stroke="#000"/><path d="M14.500 1V14.500H1" fill="none" stroke="#808080"/><rect x="2" y="1" width="12" height="2" fill="#000080"/><path d="M3 5.500h3M3 7.500h3M3 9.500h3M3 12.500h3M9 12.500h2M12 12.500h2" stroke="#000"/><path d="M7.500 4v10" stroke="#ccc"/></svg><span style="left:508px;top:722px;font-size:9px;line-height:9px;letter-spacing:0">2</span>
<svg style="left:520px;top:719px" width="16" height="16" viewBox="0 0 16 16" shape-rendering="crispEdges"><rect width="16" height="16" fill="#ECE9D8"/><path d="M0.500 15V0.500H15" fill="none" stroke="#fff"/><path d="M15.500 0V15.500H0" fill="none" stroke="#000"/><path d="M14.500 1V14.500H1" fill="none" stroke="#808080"/><rect x="2" y="1" width="12" height="2" fill="#000080"/><path d="M3 5.500h3M3 7.500h3M3 9.500h3M3 12.500h3M9 12.500h2M12 12.500h2" stroke="#000"/><path d="M7.500 4v10" stroke="#ccc"/></svg><span style="left:529px;top:722px;font-size:9px;line-height:9px;letter-spacing:0">3</span>
<svg style="left:541px;top:719px" width="16" height="16" viewBox="0 0 16 16" shape-rendering="crispEdges"><rect width="16" height="16" fill="#ECE9D8"/><path d="M0.500 15V0.500H15" fill="none" stroke="#fff"/><path d="M15.500 0V15.500H0" fill="none" stroke="#000"/><path d="M14.500 1V14.500H1" fill="none" stroke="#808080"/><rect x="2" y="1" width="12" height="2" fill="#000080"/><path d="M3 5.500h3M3 7.500h3M3 9.500h3M3 12.500h3M9 12.500h2M12 12.500h2" stroke="#000"/><path d="M7.500 4v10" stroke="#ccc"/></svg><span style="left:550px;top:722px;font-size:9px;line-height:9px;letter-spacing:0">4</span>

</div>
</body></html>
